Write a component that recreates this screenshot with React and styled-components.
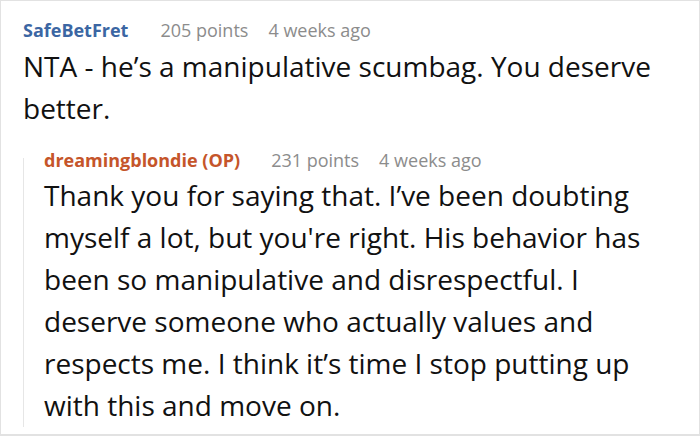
import React from "react";
import styled, { createGlobalStyle } from "styled-components";

const Global = createGlobalStyle`
  html, body { margin: 0; padding: 0; background: #fff; }
  body { font-family: "Open Sans", "Noto Sans", sans-serif; }
`;

const Frame = styled.div`
  box-sizing: border-box;
  width: 700px;
  height: 436px;
  border: 1px solid #e2e2e2;
  border-bottom-width: 2px;
  padding: 17px 0 0 22px;
  overflow: hidden;
`;

const Comment = styled.div`
  display: flex;
  flex-direction: column;
`;

const Header = styled.div`
  display: flex;
  align-items: baseline;
  font-size: 18px;
  line-height: 24px;
  color: #8c8c8c;
  margin-top: ${(p) => p.$mt || 0}px;
`;

const Author = styled.span`
  font-weight: 700;
  color: ${(p) => p.$color};
  margin-right: ${(p) => p.$gap}px;
`;

const Meta = styled.span`
  margin-right: 20px;
`;

const Body = styled.p`
  margin: ${(p) => p.$mt}px 0 0;
  font-size: 28px;
  line-height: 42px;
  color: #111;
  width: ${(p) => p.$w}px;
`;

const Reply = styled.div`
  margin-top: 29px;
  border-left: 1.5px solid #e6e6e6;
  padding-left: 20px;
  padding-bottom: 1px;
`;

export default function App() {
  return (
    <>
      <Global />
      <Frame>
        <Comment>
          <Header>
            <Author $color="#3b66a3" $gap={32}>SafeBetFret</Author>
            <Meta>205 points</Meta>
            <Meta>4 weeks ago</Meta>
          </Header>
          <Body $mt={3} $w={660}>
            NTA - he’s a manipulative scumbag. You deserve better.
          </Body>
          <Reply>
            <Header $mt={-10}>
              <Author $color="#c5552a" $gap={31}>dreamingblondie (OP)</Author>
              <Meta>231 points</Meta>
              <Meta>4 weeks ago</Meta>
            </Header>
            <Body $mt={2} $w={630}>
              Thank you for saying that. I’ve been doubting myself a lot, but
              you're right. His behavior has been so manipulative and
              disrespectful. I deserve someone who actually values and
              respects me. I think it’s time I stop putting up with this and
              move on.
            </Body>
          </Reply>
        </Comment>
      </Frame>
    </>
  );
}
